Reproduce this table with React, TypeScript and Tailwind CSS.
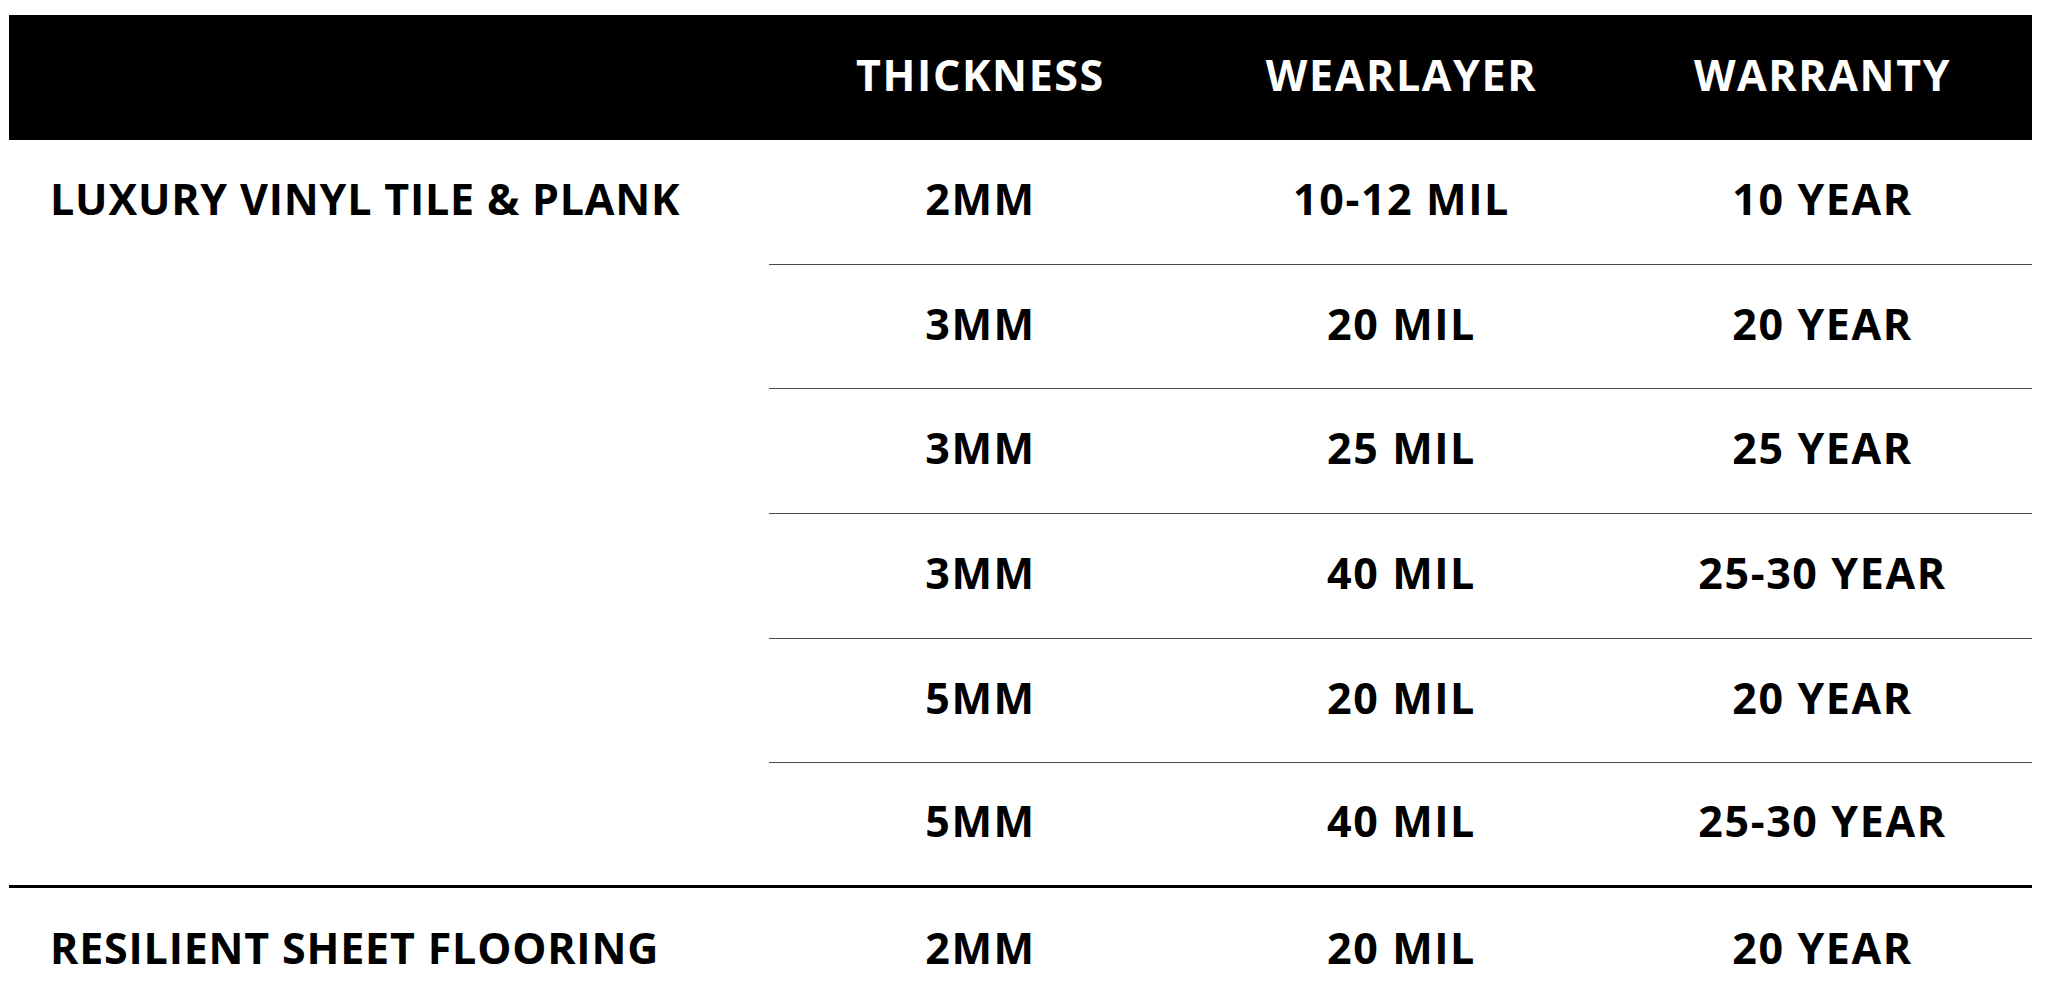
const lvtRows = [
  ["2MM", "10-12 MIL", "10 YEAR"],
  ["3MM", "20 MIL", "20 YEAR"],
  ["3MM", "25 MIL", "25 YEAR"],
  ["3MM", "40 MIL", "25-30 YEAR"],
  ["5MM", "20 MIL", "20 YEAR"],
  ["5MM", "40 MIL", "25-30 YEAR"],
];

function Cells({ values }: { values: string[] }) {
  return (
    <>
      {values.map((v, i) => (
        <div key={i} className="flex w-[421px] items-center justify-center pl-[2px] tracking-[1.6px]">
          {v}
        </div>
      ))}
    </>
  );
}

function App() {
  return (
    <div className="min-h-screen bg-white pt-[15px] pl-[9px] font-['Open_Sans',sans-serif] text-[43px] font-bold leading-none text-black">
      <div className="w-[2023px]">
        {/* Header */}
        <div className="flex h-[125px] bg-black pb-[6px] text-white">
          <div className="w-[760px]" />
          <Cells values={["THICKNESS", "WEARLAYER", "WARRANTY"]} />
        </div>

        {/* Luxury vinyl */}
        <div className="flex h-[748px] border-b-[3px] border-black">
          <div className="w-[760px]">
            <div className="flex h-[124px] items-center pb-[7px] pl-[41px] tracking-[0.8px]">
              LUXURY VINYL TILE &amp; PLANK
            </div>
          </div>
          <div className="flex flex-1 flex-col">
            {lvtRows.map((row, i) => (
              <div
                key={i}
                className={`flex pb-[7px] ${i < lvtRows.length - 1 ? "h-[124.7px] border-b border-[#4a4a4a]" : "flex-1"}`}
              >
                <Cells values={row} />
              </div>
            ))}
          </div>
        </div>

        {/* Resilient sheet */}
        <div className="flex h-[125px] pb-[7px]">
          <div className="flex w-[760px] items-center pl-[41px] tracking-[0.8px]">RESILIENT SHEET FLOORING</div>
          <Cells values={["2MM", "20 MIL", "20 YEAR"]} />
        </div>
      </div>
    </div>
  );
}

export default App;
